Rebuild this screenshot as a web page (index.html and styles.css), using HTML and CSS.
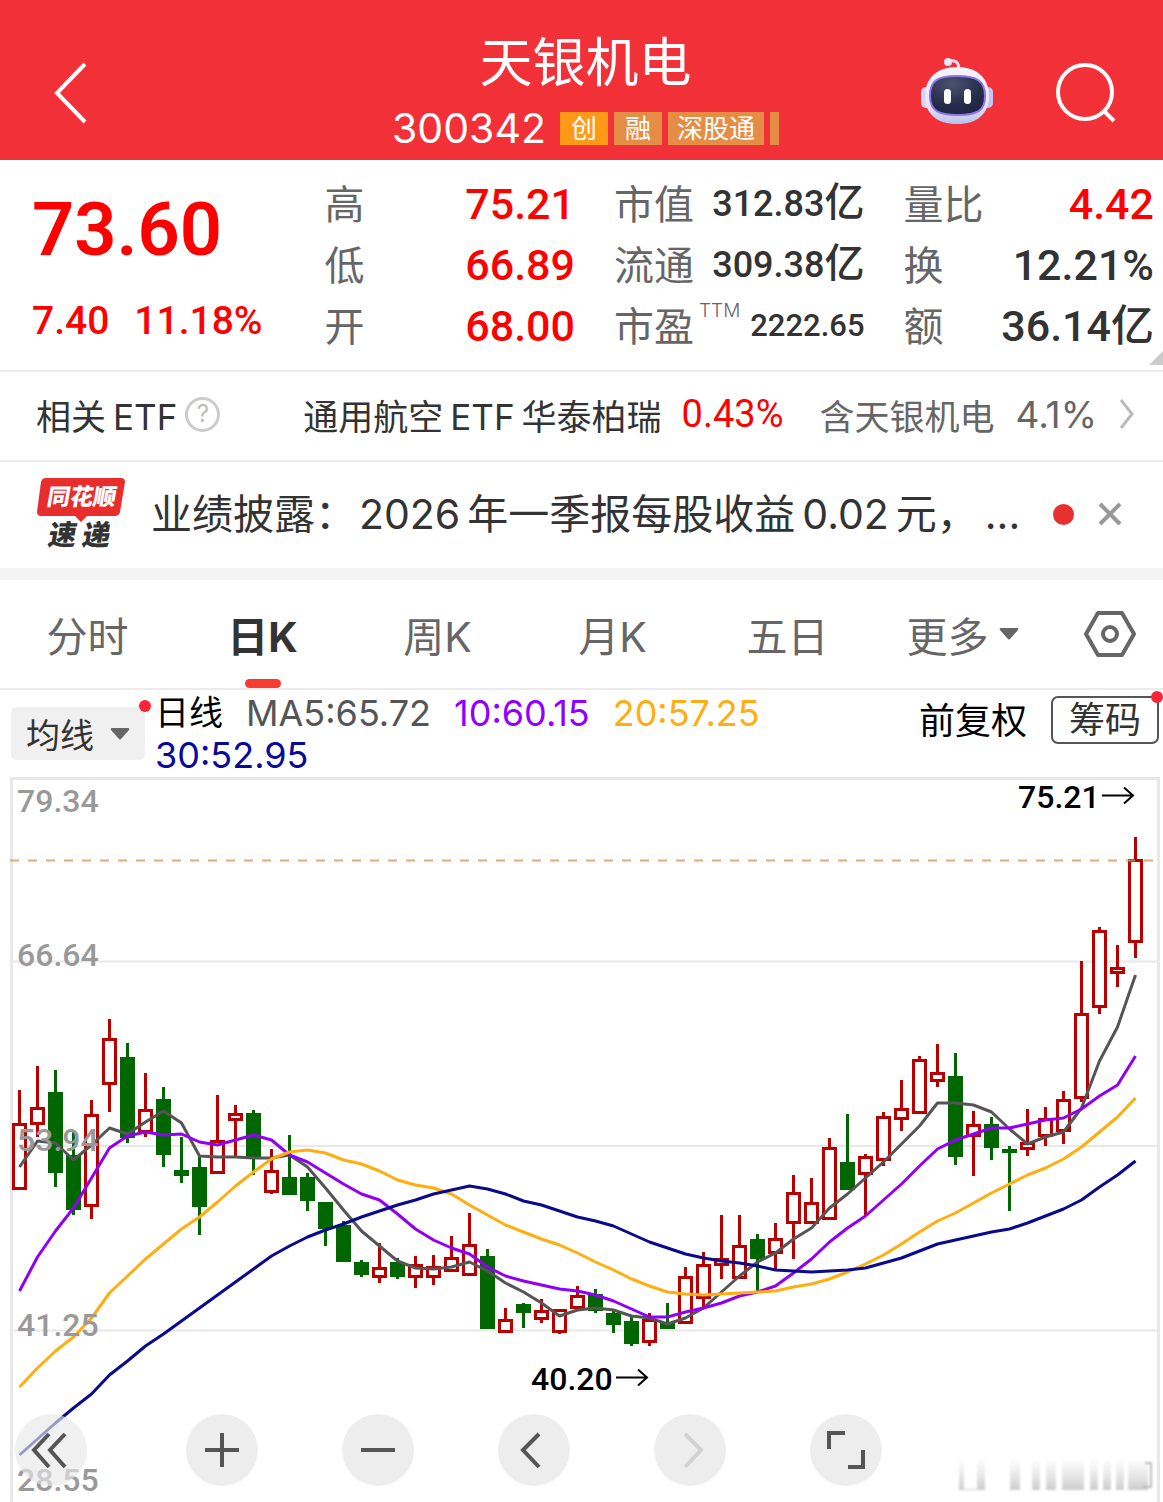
FILE: index.html
```html
<!DOCTYPE html>
<html lang="zh-CN">
<head>
<meta charset="utf-8">
<meta name="viewport" content="width=device-width, initial-scale=1">
<title>天银机电 300342</title>
<link rel="stylesheet" href="styles.css">
</head>
<body>
<header class="topbar">
  <button class="icon-btn back" aria-label="返回">
    <svg width="34" height="62" viewBox="0 0 34 62"><path d="M32 2 4 31l28 29" fill="none" stroke="#fff" stroke-width="4"/></svg>
  </button>
  <div class="heading">
    <h1>天银机电</h1>
    <div class="code-row">
      <span class="code">300342</span>
      <span class="tag tag-main">创</span>
      <span class="tag">融</span>
      <span class="tag">深股通</span>
      <span class="tag tag-cut"></span>
    </div>
  </div>
  <div class="actions">
    <button class="icon-btn" aria-label="智能助手">
      <svg width="72" height="72" viewBox="0 2 72 72">
        <defs>
          <linearGradient id="shell" x1="0" y1="0" x2="0" y2="1"><stop offset="0" stop-color="#f6f4fd"/><stop offset=".7" stop-color="#e6e4f8"/><stop offset="1" stop-color="#b9c0ea"/></linearGradient>
          <radialGradient id="visor" cx=".4" cy=".2" r=".9"><stop offset="0" stop-color="#4a5270"/><stop offset=".6" stop-color="#262d4b"/><stop offset="1" stop-color="#1d2342"/></radialGradient>
        </defs>
        <path d="M28 6q9-2 10 7" fill="none" stroke="#dcdcf2" stroke-width="3"/>
        <circle cx="27" cy="7" r="4" fill="#e8e6f8"/>
        <rect x="0" y="32" width="12" height="21" rx="5" fill="#d5d4f1"/>
        <rect x="60" y="32" width="12" height="21" rx="5" fill="#c9c2f5"/>
        <path d="M36 12c20 0 32 11 32 29S56 69 36 69 4 59 4 41s12-29 32-29Z" fill="url(#shell)"/>
        <path d="M36 21c20 0 28 5 28 20S56 60 37 60 9 56 9 41s7-20 27-20Z" fill="url(#visor)" stroke="#8f72e8" stroke-width="2"/>
        <rect x="23" y="34" width="7" height="15" rx="3.500" fill="#fff"/>
        <rect x="43" y="34" width="7" height="15" rx="3.500" fill="#fff"/>
      </svg>
    </button>
    <button class="icon-btn" aria-label="搜索">
      <svg width="62" height="62" viewBox="0 0 62 62"><g fill="none" stroke="#fff" stroke-width="4"><circle cx="30" cy="30" r="27"/><path d="m49 49 10 10"/></g></svg>
    </button>
  </div>
</header>

<section class="quote">
  <div class="price">
    <strong class="last">73.60</strong>
    <div class="change"><span>7.40</span><span>11.18%</span></div>
  </div>
  <dl class="stats">
    <div><dt>高</dt><dd class="up">75.21</dd></div>
    <div><dt>低</dt><dd class="up">66.89</dd></div>
    <div><dt>开</dt><dd class="up">68.00</dd></div>
  </dl>
  <dl class="stats">
    <div><dt>市值</dt><dd class="mid">312.83<span class="unit">亿</span></dd></div>
    <div><dt>流通</dt><dd class="mid">309.38<span class="unit">亿</span></dd></div>
    <div><dt>市盈<sup>TTM</sup></dt><dd class="small">2222.65</dd></div>
  </dl>
  <dl class="stats">
    <div><dt>量比</dt><dd class="up">4.42</dd></div>
    <div><dt>换</dt><dd>12.21%</dd></div>
    <div><dt>额</dt><dd>36.14<span class="unit-large">亿</span></dd></div>
  </dl>
  <svg class="corner" width="14" height="14" viewBox="0 0 14 14"><path d="M14 0v14H0Z" fill="#ccc"/></svg>
</section>

<section class="etf">
  <span class="etf-label">相关<span class="latin">ETF</span></span>
  <button class="icon-btn help" aria-label="说明">?</button>
  <a class="etf-link" href="#etf">
    <span class="etf-name">通用航空<span class="latin">ETF</span>华泰柏瑞</span>
    <span class="etf-rate">0.43%</span>
    <span class="etf-share">含天银机电</span>
    <span class="etf-part">4.1%</span>
    <svg width="16" height="32" viewBox="0 0 16 32"><path d="m2 2 11 14L2 30" fill="none" stroke="#bbb" stroke-width="3"/></svg>
  </a>
</section>

<section class="news">
  <svg class="badge" width="88" height="80" viewBox="0 -3 88 80" role="img" aria-label="同花顺速递">
    <path d="M9 1h75q4 0 4 4l-5 30q-1 4-5 4H50l-6 6-6-6H4q-4 0-4-4L4 5q1-4 5-4Z" fill="#e92d2d"/>
    <g transform="skewX(-10)" font-weight="900">
      <text x="14" y="28" font-size="23" fill="#fff">同花顺</text>
      <text x="22" y="68" font-size="28" fill="#333">速</text>
      <text x="56" y="68" font-size="28" fill="#333">递</text>
    </g>
  </svg>
  <a class="news-text" href="#news">业绩披露：<span class="latin year">2026</span>年一季报每股收益<span class="latin">0.02</span>元，<span class="latin">...</span></a>
  <i class="unread"></i>
  <button class="icon-btn" aria-label="关闭">
    <svg width="24" height="24" viewBox="0 0 24 24"><path d="m2 2 20 20M22 2 2 22" stroke="#999" stroke-width="4" fill="none"/></svg>
  </button>
</section>

<nav class="tabs">
  <button>分时</button>
  <button class="active">日K</button>
  <button>周K</button>
  <button>月K</button>
  <button>五日</button>
  <button>更多<svg width="20" height="14" viewBox="0 0 20 14"><path d="M2 1h16q2 0 1 2l-8 9q-1 1-2 0L1 3Q0 1 2 1Z" fill="#666"/></svg></button>
  <button class="settings" aria-label="设置">
    <svg width="52" height="46" viewBox="0 0 52 46"><g fill="none" stroke="#666" stroke-width="4" stroke-linejoin="round"><path d="M14 2h24l12 21-12 21H14L2 23Z"/><circle cx="26" cy="23" r="7"/></g></svg>
  </button>
</nav>

<section class="legend">
  <button class="ma-select">均线<svg width="20" height="14" viewBox="0 0 20 14"><path d="M2 1h16q2 0 1 2l-8 9q-1 1-2 0L1 3Q0 1 2 1Z" fill="#666"/></svg><i class="dot"></i></button>
  <div class="ma-values">
    <span class="period">日线</span>
    <span class="ma5">MA5:65.72</span>
    <span class="ma10">10:60.15</span>
    <span class="ma20">20:57.25</span>
    <span class="ma30">30:52.95</span>
  </div>
  <button class="adjust">前复权</button>
  <button class="chips">筹码<i class="dot"></i></button>
</section>

<main class="chart">
  <svg class="plot" viewBox="0 777 1163 725" role="img" aria-label="日K线图">
    <defs>
      <linearGradient id="fade" x1="0" y1="0" x2="0" y2="1"><stop offset="0" stop-color="#ddd" stop-opacity="0"/><stop offset="1" stop-color="#ccc"/></linearGradient>
    </defs>
    <g class="grid">
      <path d="M11 961.500H1158M11 1146H1158M11 1330.500H1158"/>
      <path class="frame" d="M11.500 1502V778.500H1158.500V1502"/>
    </g>
    <g id="candles"></g>
    <path class="current" d="M10 860.500H1156"/>
    <g id="averages"></g>
    <g class="axis">
      <text x="17" y="812">79.34</text>
      <text x="17" y="966">66.64</text>
      <text x="17" y="1151">53.94</text>
      <text x="17" y="1336">41.25</text>
      <text x="17" y="1491">28.55</text>
    </g>
    <g class="extremes">
      <text x="1018" y="808">75.21</text>
      <path d="M1102 795.500h31m-9-8 9 8-9 8"/>
      <text x="531" y="1390">40.20</text>
      <path d="M616 1377.500h31m-9-8 9 8-9 8"/>
    </g>
    <g class="haze">
      <path d="M959 1458h26v32h-26zM1010 1458h10v32h-10zM1032 1458h8v32h-8zM1046 1458h10v32h-10zM1062 1458h22v32h-22zM1090 1458h8v32h-8zM1103 1458h8v32h-8zM1116 1458h8v32h-8zM1128 1458h20v32h-20z" fill="url(#fade)"/>
      <path d="M964 1460h13v29h-13z" fill="#fff"/>
      <path d="M1145 1463h6v24h-8" fill="none" stroke="#bbb" stroke-width="2"/>
    </g>
  </svg>
  <div class="tools">
    <button class="first" aria-label="最早"><svg viewBox="0 0 72 72"><path d="M34 20 19 36l15 17M50 20 35 36l15 17"/></svg></button>
    <button aria-label="放大"><svg viewBox="0 0 72 72"><path d="M19 36h34M36 19v34"/></svg></button>
    <button aria-label="缩小"><svg viewBox="0 0 72 72"><path d="M19 36h34"/></svg></button>
    <button aria-label="左移"><svg viewBox="0 0 72 72"><path d="M41 20 25 36l16 17"/></svg></button>
    <button aria-label="右移" disabled><svg viewBox="0 0 72 72"><path d="m31 20 16 16-16 17"/></svg></button>
    <button aria-label="全屏"><svg viewBox="0 0 72 72"><path d="M35 19H19v16M53 36v17H38"/></svg></button>
  </div>
</main>
<script src="chart.js"></script>
</body>
</html>
```
FILE: styles.css
```css
* { box-sizing: border-box; }

body {
  margin: 0;
  background: #fff;
  color: #333;
  font-family: Inter, "Noto Sans CJK SC", sans-serif;
  overflow-x: hidden;
}

button {
  padding: 0;
  border: 0;
  background: none;
  color: inherit;
  font: inherit;
  cursor: pointer;
}

a { color: inherit; text-decoration: none; }
svg { display: block; }
h1, dl, dd { margin: 0; }

.icon-btn { flex: none; }

/* Header */
.topbar {
  display: grid;
  grid-template-columns: 1fr 400px 1fr;
  height: 160px;
  background: #f23038;
  color: #fff;
}

.back { justify-self: start; padding: 25px 0 0 53px; }
.heading { display: flex; flex-direction: column; align-items: center; padding: 30px 0 0 8px; }
.heading h1 { font-size: 53px; font-weight: 400; line-height: 66px; }
.code-row { display: flex; align-items: center; gap: 6px; height: 64px; }
.code { margin-right: 8px; font-size: 41px; }

.tag {
  height: 33px;
  padding: 0 9px;
  background: #e58d45;
  font-size: 26px;
  line-height: 33px;
  min-width: 48px;
  text-align: center;
  white-space: nowrap;
}

.tag-main { background: #ff9a16; }
.tag-cut { min-width: 9px; padding: 0; }

.actions {
  display: flex;
  align-items: center;
  justify-content: flex-end;
  gap: 62px;
  padding: 25px 46px 0 0;
}

/* Quote */
.quote {
  position: relative;
  display: grid;
  grid-template-columns: 253fr 250fr 250fr 250fr;
  column-gap: 39px;
  padding: 13px 9px 14px 32px;
  border-bottom: 2px solid #ebebeb;
  font-family: Roboto, "Noto Sans CJK SC", sans-serif;
}

.price { color: #f00; font-weight: 500; }
.last { display: block; font-size: 74px; font-weight: 600; line-height: 113px; }
.change { display: flex; gap: 25px; font-size: 39px; line-height: 70px; }

.stats div {
  display: flex;
  align-items: center;
  justify-content: space-between;
  height: 61px;
  white-space: nowrap;
}

.stats dt { padding-top: 5px; color: #666; font-size: 40px; line-height: 56px; }
.stats dd { font-size: 43px; font-weight: 500; line-height: 60px; }
.stats .mid { font-size: 36px; }
.stats .small { font-size: 31px; }
.stats .up { color: #f00; }
.unit { font-size: 40px; }
.unit-large { font-size: 43px; }
.stats sup { margin-left: 5px; font: 300 19px/20px Inter, sans-serif; vertical-align: 24px; }
.corner { position: absolute; right: 0; bottom: 5px; }

/* Related fund */
.etf {
  display: flex;
  align-items: center;
  height: 90px;
  padding: 0 28px 4px 36px;
  border-bottom: 2px solid #ebebeb;
  font-size: 35px;
  white-space: nowrap;
}

.latin { margin: 0 7px; }
.etf-label { margin-right: 1px; }

.help {
  width: 35px;
  height: 35px;
  border: 3px solid #ccc;
  border-radius: 50%;
  color: #bbb;
  font-size: 24px;
  line-height: 28px;
}

.etf-link { display: flex; flex: 1; align-items: center; justify-content: flex-end; }
.etf-rate { margin: 0 36px 0 20px; color: #f00; font-family: Roboto, sans-serif; font-size: 38px; }
.etf-share, .etf-part { color: #666; }
.etf-part { margin: 0 22px 0 21px; font-size: 37px; }

/* News */
.news {
  display: flex;
  align-items: center;
  height: 118px;
  padding: 0 41px 2px 37px;
  border-bottom: 12px solid #f4f4f4;
}

.badge { flex: none; margin-right: 26px; font-family: "Noto Sans CJK SC", sans-serif; overflow: visible; }
.news-text { flex: 1; overflow: hidden; font-size: 41px; line-height: 60px; white-space: nowrap; }
.news-text .year { margin-left: 3px; }
.unread { flex: none; width: 21px; height: 21px; margin: 0 24px; border-radius: 50%; background: #e93030; }

/* Period tabs */
.tabs {
  display: grid;
  grid-template-columns: repeat(6, 175fr) 113fr;
  height: 110px;
  border-bottom: 2px solid #ebebeb;
  color: #666;
  font-size: 41px;
}

.tabs button { position: relative; display: flex; align-items: center; justify-content: center; gap: 10px; }
.tabs .settings { padding-left: 6px; }
.tabs .active { color: #333; font-weight: 700; }

.tabs .active::after {
  content: "";
  position: absolute;
  bottom: 0;
  width: 36px;
  height: 9px;
  border-radius: 5px;
  background: #f73b30;
}

/* Moving-average legend */
.legend { display: flex; align-items: flex-start; height: 87px; padding: 0 4px 0 11px; }

.ma-select {
  position: relative;
  display: flex;
  flex: none;
  align-items: center;
  justify-content: space-between;
  width: 134px;
  height: 53px;
  margin-top: 17px;
  padding: 0 15px;
  border-radius: 6px;
  background: #f0f0f0;
  font-size: 34px;
}

.dot { position: absolute; top: -7px; right: -6px; width: 12px; height: 12px; border-radius: 50%; background: #ff2338; }

.ma-values {
  display: flex;
  flex: 1;
  flex-wrap: wrap;
  column-gap: 23px;
  margin: 2px 100px 0 10px;
  font-size: 36px;
  line-height: 42px;
}

.period { color: #000; font-size: 34px; }
.ma5 { color: #555; }
.ma10 { color: #9100ff; }
.ma20 { color: #ffae12; }
.ma30 { color: #0a0a99; }

.adjust { margin: 6px 24px 0 0; color: #000; font-size: 36px; line-height: 50px; white-space: nowrap; }

.chips {
  position: relative;
  width: 108px;
  height: 48px;
  margin-top: 6px;
  border: 2px solid #555;
  border-radius: 7px;
  font-size: 36px;
  line-height: 42px;
  white-space: nowrap;
}

/* Chart */
.chart { position: relative; }
.plot { width: 100%; height: auto; font-family: Roboto, sans-serif; }
.grid path { fill: none; stroke: #e8e8e8; stroke-width: 2; }
.grid .frame { stroke-width: 3; }
.current { stroke: #d49a5b; stroke-width: 2; stroke-opacity: 0.8; stroke-dasharray: 9 9; }
.axis text { fill: #999; font-size: 32px; font-weight: 500; }
.extremes text { fill: #000; font-size: 32px; font-weight: 500; }
.extremes path { fill: none; stroke: #000; stroke-width: 2; }
.haze { filter: blur(1px); }
#candles path { stroke-width: 3; }
#candles .rise { fill: #fff; stroke: #b80000; }
#candles .fall { fill: #060; stroke: #060; }
#averages polyline { fill: none; stroke-width: 3; stroke-linejoin: round; }

.tools {
  position: absolute;
  bottom: 16px;
  left: 15px;
  display: flex;
  gap: 84px;
}

.tools button { width: 72px; height: 72px; border-radius: 50%; background: rgba(232, 232, 232, 0.8); }
.tools .first { margin-right: 15px; background: rgba(232, 232, 232, 0.65); }
.tools path { fill: none; stroke: #555; stroke-width: 4; }
.tools button:disabled path { stroke: #d2d2d2; }
```
FILE: chart.js
```js
// One row per trading day: high, body top, body bottom, low, and 1 for a rise.
const days = [
  [1090,1123,1190,1190,1],[1066,1107,1125,1137,1],[1070,1092,1173,1187,0],[1130,1155,1210,1215,0],
  [1100,1114,1207,1219,1],[1019,1038,1085,1112,1],[1043,1057,1138,1143,0],[1073,1109,1133,1137,1],
  [1087,1099,1155,1167,0],[1137,1170,1176,1183,0],[1157,1167,1207,1235,0],[1095,1140,1174,1174,1],
  [1105,1113,1121,1157,1],[1110,1113,1159,1175,0],[1149,1170,1193,1194,1],[1135,1177,1195,1195,0],
  [1173,1177,1201,1211,0],[1202,1202,1229,1246,0],[1221,1225,1262,1262,0],[1260,1262,1275,1277,0],
  [1243,1267,1278,1283,1],[1258,1262,1277,1279,0],[1256,1264,1278,1288,1],[1255,1266,1278,1285,1],
  [1236,1257,1272,1272,1],[1213,1244,1276,1276,1],[1249,1256,1329,1329,0],[1308,1319,1333,1333,1],
  [1303,1304,1313,1328,0],[1299,1310,1320,1323,1],[1309,1309,1333,1334,1],[1286,1295,1309,1309,1],
  [1289,1294,1311,1313,0],[1310,1313,1325,1333,0],[1317,1321,1344,1346,0],[1313,1319,1343,1346,1],
  [1303,1323,1329,1329,0],[1267,1276,1324,1324,1],[1252,1264,1299,1308,1],[1215,1258,1266,1279,1],
  [1215,1245,1279,1279,1],[1234,1239,1259,1291,0],[1223,1238,1254,1270,1],[1175,1192,1224,1259,1],
  [1178,1202,1224,1224,1],[1138,1147,1220,1220,1],[1114,1162,1190,1190,0],[1154,1156,1175,1216,1],
  [1112,1116,1161,1166,1],[1080,1108,1120,1131,1],[1056,1059,1114,1114,1],[1044,1072,1082,1087,1],
  [1053,1076,1157,1165,0],[1111,1124,1137,1176,1],[1117,1124,1148,1160,0],[1146,1149,1153,1211,0],
  [1109,1142,1150,1156,1],[1107,1118,1137,1146,1],[1091,1099,1132,1144,1],[961,1013,1099,1102,1],
  [927,930,1008,1014,1],[945,967,974,987,1],[837,859,943,958,1]
];

const averages = {
  '#555555': [1167,1141,1143,1160,1145,1128,1134,1122,1111,1123,1156,1157,1157,1158,1158,1155,1167,1188,1210,1231,1246,1261,1268,1269,1267,1262,1271,1283,1292,1303,1316,1310,1308,1310,1316,1318,1324,1318,1308,1292,1276,1262,1253,1239,1228,1208,1194,1178,1162,1144,1126,1103,1103,1105,1112,1129,1144,1137,1132,1108,1061,1027,975],
  '#9100f5': [1291,1257,1231,1208,1178,1148,1136,1132,1135,1134,1142,1145,1140,1135,1140,1155,1162,1173,1184,1194,1200,1214,1229,1240,1248,1254,1267,1276,1281,1285,1289,1291,1295,1301,1309,1317,1317,1312,1308,1303,1296,1292,1286,1273,1259,1242,1228,1216,1200,1184,1166,1149,1140,1134,1128,1128,1124,1120,1118,1109,1096,1085,1056],
  '#ffae12': [1387,1368,1351,1337,1318,1293,1276,1259,1244,1229,1217,1202,1186,1172,1159,1152,1150,1153,1160,1164,1171,1180,1185,1188,1194,1205,1215,1225,1232,1239,1245,1253,1262,1270,1279,1286,1292,1294,1295,1294,1293,1292,1291,1287,1284,1279,1272,1264,1255,1244,1232,1221,1213,1203,1193,1184,1175,1168,1159,1147,1132,1117,1098],
  '#0a0a8c': [1455,1439,1423,1408,1394,1375,1361,1346,1334,1321,1308,1295,1282,1269,1256,1246,1237,1230,1224,1217,1211,1205,1200,1194,1190,1186,1189,1194,1201,1205,1211,1217,1221,1226,1234,1242,1248,1254,1258,1261,1263,1266,1270,1271,1272,1271,1270,1268,1263,1258,1251,1244,1240,1236,1232,1229,1223,1216,1209,1200,1187,1175,1161]
};

const ns = 'http://www.w3.org/2000/svg';
const dayX = i => 19.5 + i * 18;

days.forEach(([high, top, bottom, low, rise], i) => {
  const x = dayX(i);
  const y1 = top + 1.5;
  const y2 = Math.max(bottom - 1.5, y1 + 1);
  const candle = document.createElementNS(ns, 'path');
  candle.setAttribute('class', rise ? 'rise' : 'fall');
  candle.setAttribute('d', `M${x} ${high}V${y1}M${x} ${y2}V${Math.max(low, y2)}M${x - 6} ${y1}H${x + 6}V${y2}H${x - 6}Z`);
  document.getElementById('candles').append(candle);
});

for (const [color, values] of Object.entries(averages)) {
  const line = document.createElementNS(ns, 'polyline');
  line.setAttribute('stroke', color);
  line.setAttribute('points', values.map((y, i) => `${dayX(i)},${y}`).join(' '));
  document.getElementById('averages').append(line);
}
```
